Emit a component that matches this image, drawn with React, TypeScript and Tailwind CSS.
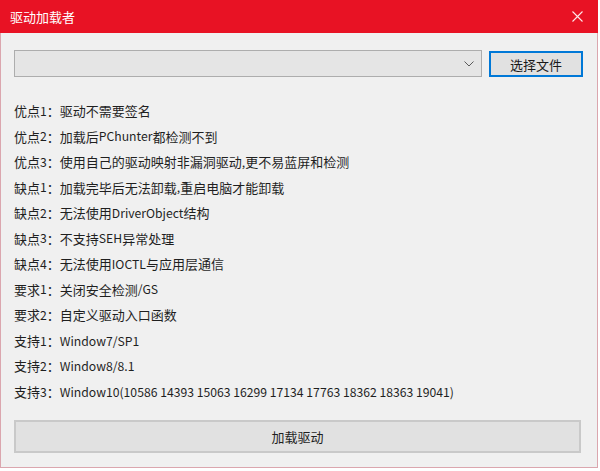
const lines = [
  '优点1：驱动不需要签名',
  '优点2：加载后PChunter都检测不到',
  '优点3：使用自己的驱动映射非漏洞驱动,更不易蓝屏和检测',
  '缺点1：加载完毕后无法卸载,重启电脑才能卸载',
  '缺点2：无法使用DriverObject结构',
  '缺点3：不支持SEH异常处理',
  '缺点4：无法使用IOCTL与应用层通信',
  '要求1：关闭安全检测/GS',
  '要求2：自定义驱动入口函数',
  '支持1：Window7/SP1',
  '支持2：Window8/8.1',
  '支持3：Window10(10586 14393 15063 16299 17134 17763 18362 18363 19041)',
];

// latin runs are a bit narrower in the original font
function Line({ text }: { text: string }) {
  const parts = text.split(/([A-Za-z0-9()/., ]+)/).filter(Boolean);
  return (
    <>
      {parts.map((p, i) =>
        /^[A-Za-z0-9()/., ]+$/.test(p) ? (
          <span key={i} className="text-[12.2px]">{p}</span>
        ) : (
          <span key={i}>{p}</span>
        )
      )}
    </>
  );
}

export default function App() {
  return (
    <div className="w-[600px] h-[471px] bg-white font-['Noto_Sans_CJK_SC',sans-serif]">
      <div className="w-[598px] h-[468px] flex flex-col border border-t-0 border-[#dba6ae] bg-[#f0f0f0]">
        {/* Title bar */}
        <div className="h-[33px] -mx-px bg-[#e81224] flex items-center justify-between pl-[10px] pr-[15px]">
          <span className="text-white text-[13px] leading-none">驱动加载者</span>
          <svg width="11" height="11" viewBox="0 0 11 11" className="text-white/90">
            <path d="M0.5 0.5L10.5 10.5M10.5 0.5L0.5 10.5" stroke="currentColor" strokeWidth="1.1" fill="none" />
          </svg>
        </div>

        <div className="flex-1 flex flex-col px-[13px] pt-[17px] pb-[14px]">
          {/* File picker row */}
          <div className="flex items-start gap-[7px]">
            <div className="w-[468px] h-[27px] bg-[#e5e5e5] border border-[#adadad] flex items-center justify-end pr-[7px]">
              <svg width="10" height="6" viewBox="0 0 10 6" className="text-[#5a5a5a]">
                <path d="M0.5 0.5L5 5L9.5 0.5" stroke="currentColor" strokeWidth="1" fill="none" />
              </svg>
            </div>
            <button className="mt-px w-[94px] h-[26px] bg-[#e1e1e1] border-2 border-[#0078d7] text-[13px] text-[#1a1a1a] leading-none">
              选择文件
            </button>
          </div>

          {/* Notes */}
          <div className="mt-[21px] flex flex-col">
            {lines.map((l) => (
              <div key={l} className="h-[25.55px] flex items-center text-[13px] text-[#1f1f1f] whitespace-nowrap">
                <Line text={l} />
              </div>
            ))}
          </div>

          <button className="mt-auto w-[567px] h-[33px] bg-[#e1e1e1] border-2 border-[#c9c9c9] text-[13px] text-[#1f1f1f]">
            加载驱动
          </button>
        </div>
      </div>
    </div>
  );
}
